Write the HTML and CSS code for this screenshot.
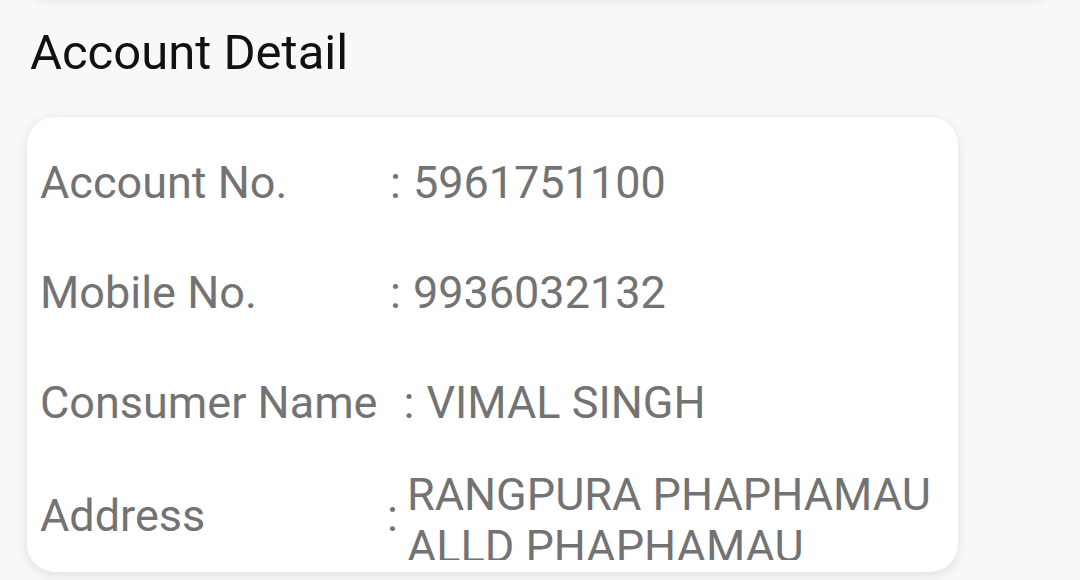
FILE: index.html
```html
<!DOCTYPE html>
<html lang="en">
  <head>
    <meta charset="UTF-8" />
    <meta name="viewport" content="width=device-width, initial-scale=1.0" />
    <title>Account Detail</title>
    <link rel="stylesheet" href="styles.css">
  </head>
  <body>
    <div class="page">
      <div class="top-card"></div>
      <h1 class="section-title">Account Detail</h1>
      <div class="card">
        <div class="card-body">
          <div class="row">
            <span class="label">Account No.</span>
            <span class="colon">:</span>
            <span class="value">5961751100</span>
          </div>
          <div class="row">
            <span class="label">Mobile No.</span>
            <span class="colon">:</span>
            <span class="value">9936032132</span>
          </div>
          <div class="row">
            <span class="label">Consumer Name</span>
            <span class="colon">:</span>
            <span class="value">VIMAL SINGH</span>
          </div>
          <div class="row row-multi">
            <span class="label">Address</span>
            <span class="colon">:</span>
            <span class="value">RANGPURA PHAPHAMAU<br />ALLD PHAPHAMAU</span>
          </div>
        </div>
      </div>
    </div>
  </body>
</html>
```

FILE: styles.css
```css
html,
body {
  margin: 0;
  height: 100%;
  overflow: hidden;
}
body {
  font-family: Roboto, "Noto Sans", Arial, sans-serif;
  background-color: #f7f8fa;
}
.page {
  padding: 0 25px 0 27px;
}
.top-card {
  height: 100px;
  margin: -100px 0 0 -2px;
  background: #ffffff;
  border-radius: 0 0 22px 22px;
  box-shadow: 0 2px 8px rgba(0, 0, 0, 0.06);
}
.section-title {
  margin: 0;
  padding: 24px 0 0 3px;
  height: 117px;
  box-sizing: border-box;
  font-size: 49px;
  font-weight: 400;
  line-height: 58px;
  color: #111;
}
.card {
  width: 931px;
  height: 455px;
  box-sizing: border-box;
  padding: 11px 0 12px;
  background: white;
  border-radius: 28px;
  box-shadow: 0 3px 12px rgba(0, 0, 0, 0.1);
}
.card-body {
  height: 100%;
  overflow: hidden;
}
.row {
  display: flex;
  align-items: center;
  height: 110px;
  padding-left: 13px;
  font-size: 45px;
  line-height: 52px;
  color: #737373;
}
.label {
  flex: 0 0 auto;
  min-width: 348px;
  padding-right: 24px;
  box-sizing: border-box;
}
.colon {
  margin-right: 12px;
  padding-left: 2px;
}
.row-multi {
  height: auto;
}
.row-multi .label {
  min-width: 345px;
}
.row-multi .colon {
  margin-right: 9px;
}
.row-multi .value {
  padding-top: 11px;
}
```
